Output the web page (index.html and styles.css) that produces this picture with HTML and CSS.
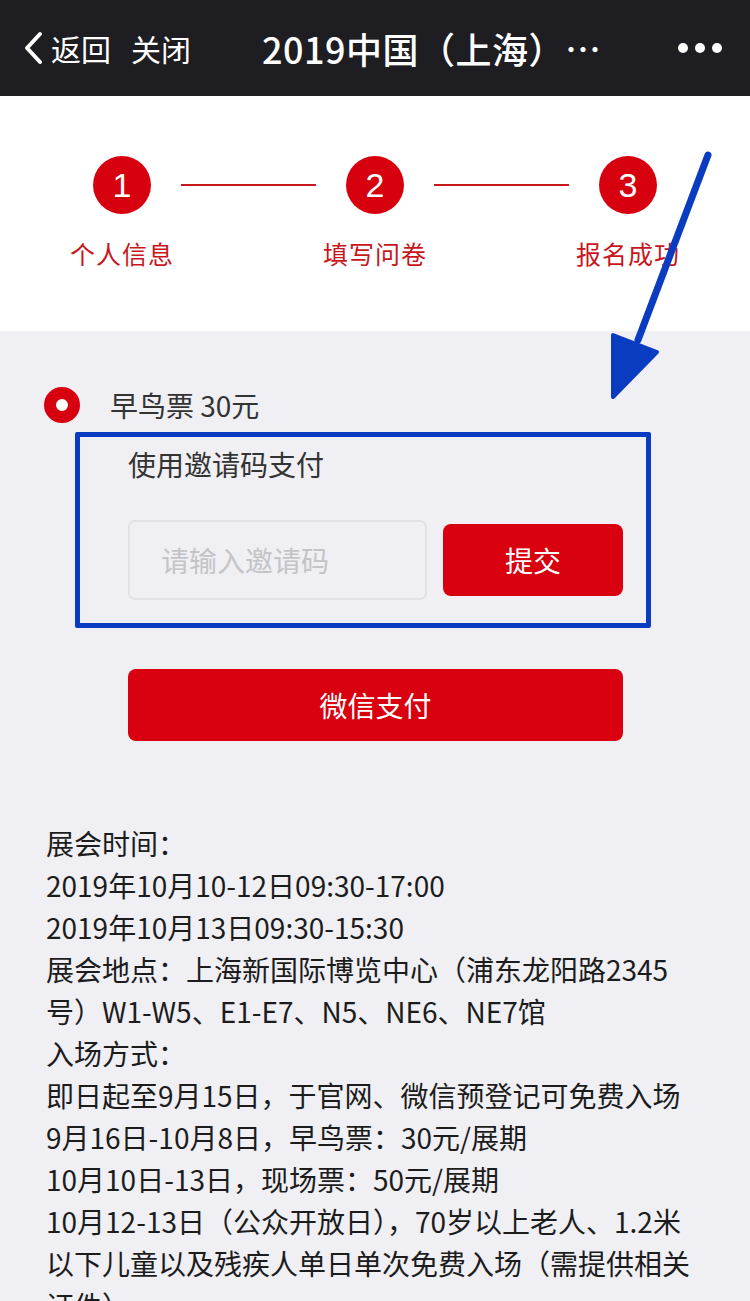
FILE: index.html
```html
<!DOCTYPE html>
<html lang="zh-CN">
<head>
<meta charset="utf-8">
<title>报名</title>
<link rel="stylesheet" href="styles.css">
</head>
<body>
<div class="page">
  <header class="topbar">
    <svg class="back" width="22" height="34" viewBox="0 0 22 34"><path d="M18 3 L5 17 L18 31" fill="none" stroke="#fff" stroke-width="4" stroke-linecap="round" stroke-linejoin="round"/></svg>
    <span class="nav-txt">返回</span>
    <span class="nav-txt close">关闭</span>
    <span class="title">2019中国（上海）…</span>
    <span class="dots"><i></i><i></i><i></i></span>
  </header>

  <section class="steps">
    <div class="step-row">
      <span class="circle">1</span><span class="conn"></span>
      <span class="circle">2</span><span class="conn"></span>
      <span class="circle">3</span>
    </div>
    <div class="label-row">
      <span>个人信息</span><span>填写问卷</span><span>报名成功</span>
    </div>
  </section>

  <main class="content">
    <div class="ticket">
      <span class="radio"></span>
      <span class="ticket-name">早鸟票 30元</span>
    </div>
    <div class="invite">
      <div class="invite-title">使用邀请码支付</div>
      <div class="invite-row">
        <div class="input">请输入邀请码</div>
        <div class="btn submit">提交</div>
      </div>
    </div>
    <div class="btn pay">微信支付</div>

    <p class="info">展会时间：<br>2019年10月10-12日09:30-17:00<br>2019年10月13日09:30-15:30<br>展会地点：上海新国际博览中心（浦东龙阳路2345<br>号）W1-W5、E1-E7、N5、NE6、NE7馆<br>入场方式：<br>即日起至9月15日，于官网、微信预登记可免费入场<br>9月16日-10月8日，早鸟票：30元/展期<br>10月10日-13日，现场票：50元/展期<br>10月12-13日（公众开放日），70岁以上老人、1.2米<br>以下儿童以及残疾人单日单次免费入场（需提供相关<br>证件）</p>
  </main>

  <svg class="arrow" width="750" height="420" viewBox="0 0 750 420">
    <line x1="708" y1="155" x2="638" y2="340" stroke="#0a3cc2" stroke-width="7" stroke-linecap="round"/>
    <polygon points="613,335 657,352 613,397" fill="#0a3cc2" stroke="#0a3cc2" stroke-width="4" stroke-linejoin="round"/>
  </svg>
</div>
</body>
</html>
```

FILE: styles.css
```css
html, body {
  margin: 0;
  padding: 0;
  background: #efeff4;
}
body {
  font-family: "Noto Sans CJK SC", "Noto Sans", sans-serif;
  overflow: hidden;
}
.page {
  position: relative;
  width: 750px;
  height: 1301px;
  overflow: hidden;
}
.topbar {
  height: 96px;
  background: #1e1d21;
  color: #fff;
  display: flex;
  align-items: center;
  box-sizing: border-box;
  padding-left: 22px;
}
.back {
  display: block;
  margin-right: 7px;
}
.nav-txt {
  font-size: 30px;
  line-height: 40px;
}
.close {
  margin-left: 20px;
}
.title {
  margin-left: 71px;
  font-size: 36px;
  font-weight: 500;
  line-height: 44px;
  white-space: nowrap;
  letter-spacing: 0.5px;
}
.dots {
  margin-left: auto;
  margin-right: 28px;
  display: flex;
  gap: 7px;
}
.dots i {
  width: 10px;
  height: 10px;
  border-radius: 50%;
  background: #fff;
  display: block;
}
.steps {
  background: #fff;
  height: 235px;
  box-sizing: border-box;
  padding-top: 60px;
}
.step-row {
  display: flex;
  align-items: center;
  padding-left: 93px;
}
.circle {
  width: 58px;
  height: 58px;
  border-radius: 50%;
  background: #d7000f;
  color: #fff;
  font-family: "Liberation Sans", sans-serif;
  font-size: 34px;
  line-height: 58px;
  text-align: center;
}
.conn {
  width: 135px;
  height: 2px;
  background: #c8161d;
  margin: 0 30px;
}
.label-row {
  display: grid;
  grid-template-columns: repeat(3, 160px);
  justify-content: space-between;
  padding: 0 42px;
  margin-top: 21px;
  color: #c8161d;
  font-size: 25px;
  line-height: 36px;
  text-align: center;
  letter-spacing: 1px;
}
.content {
  padding: 56px 0 0 0;
}
.ticket {
  display: flex;
  align-items: center;
  padding-left: 44px;
  height: 36px;
}
.radio {
  width: 36px;
  height: 36px;
  box-sizing: border-box;
  border: 12px solid #d7000f;
  border-radius: 50%;
  background: #fff;
}
.ticket-name {
  margin-left: 30px;
  font-size: 28px;
  color: #333;
}
.invite {
  margin: 9px 0 0 75px;
  width: 576px;
  height: 196px;
  box-sizing: border-box;
  border: 5px solid #0a3cc2;
  border-radius: 2px;
  padding: 7px 0 0 48px;
}
.invite-title {
  font-size: 28px;
  line-height: 40px;
  color: #333;
}
.invite-row {
  display: flex;
  align-items: center;
  margin-top: 36px;
  gap: 16px;
}
.input {
  width: 299px;
  height: 80px;
  box-sizing: border-box;
  border: 2px solid #e2e2e6;
  border-radius: 7px;
  background: #f0eff4;
  color: #c4c4c8;
  font-size: 28px;
  line-height: 76px;
  padding-left: 31px;
}
.btn {
  background: #d9000f;
  color: #fff;
  border-radius: 8px;
  text-align: center;
  font-size: 28px;
}
.submit {
  width: 180px;
  height: 72px;
  line-height: 72px;
}
.pay {
  margin: 41px 0 0 128px;
  width: 495px;
  height: 72px;
  line-height: 72px;
}
.info {
  margin: 81px 0 0 46px;
  font-size: 28px;
  line-height: 42px;
  color: #1c1c1c;
  white-space: nowrap;
}
.arrow {
  position: absolute;
  left: 0;
  top: 0;
  pointer-events: none;
}
```
